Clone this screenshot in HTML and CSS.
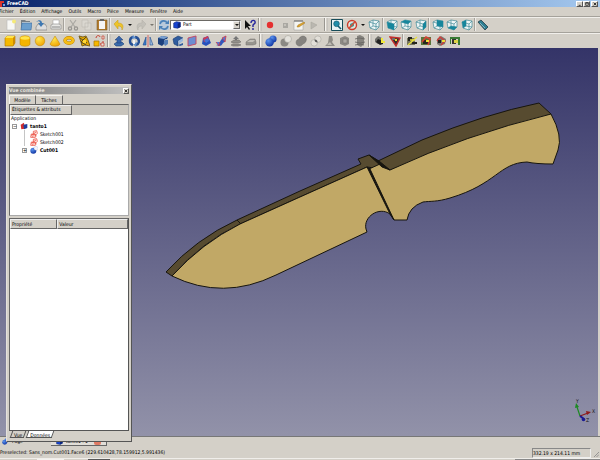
FILE: index.html
```html
<!DOCTYPE html>
<html lang="fr">
<head>
    <meta charset="UTF-8">
    <meta name="viewport" content="width=device-width, initial-scale=1.0">
    <title>FreeCAD</title>
    <link rel="stylesheet" href="styles.css">
</head>
<body>
    <!-- Shared icon shapes -->
    <svg class="sprite" aria-hidden="true">
        <defs>
            <linearGradient id="sky" x1="0" y1="0" x2="0" y2="1"><stop offset="0" stop-color="#343468"/><stop offset="1" stop-color="#9292a9"/></linearGradient>
            <radialGradient id="gold" cx=".35" cy=".3" r=".8"><stop offset="0" stop-color="#ffe64d"/><stop offset="1" stop-color="#f0a000"/></radialGradient>
            <radialGradient id="blue" cx=".35" cy=".3" r=".8"><stop offset="0" stop-color="#5b94ee"/><stop offset="1" stop-color="#0b2e9c"/></radialGradient>
        </defs>
        <symbol id="new" viewBox="0 0 12 12"><path d="M2 1h7l1 2v8H2z" fill="#f8f8f5" stroke="#bbb" stroke-width=".6"/><circle cx="9" cy="2.5" r="2" fill="#f5ea78"/></symbol>
        <symbol id="open" viewBox="0 0 12 12"><path d="M1 10V1h4l1 1h4v3" fill="#777f85"/><path d="M2 3h8v4H2z" fill="#d9dedf"/><path d="M1 11 2 4h10l-1 7z" fill="#6b9fce" stroke="#3a6da2" stroke-width=".6"/></symbol>
        <symbol id="save" viewBox="0 0 12 12"><path d="m1 8 2-3h7l2 3v3H1z" fill="#ddd" stroke="#777" stroke-width=".6"/><path d="M1 3c3-3 6-2 6 1h2L6 8 3 4h2C5 2 3 2 1 3z" fill="#3e78b2"/></symbol>
        <symbol id="print" viewBox="0 0 12 12"><path d="M3 1h6v5H3z" fill="#fff" stroke="#999" stroke-width=".5"/><path d="m1 6 2-1h6l2 1v4H1z" fill="#e8e8e5" stroke="#888" stroke-width=".6"/><path d="M2 8h8" stroke="#888"/></symbol>
        <symbol id="cut" viewBox="0 0 12 12"><path d="m3 1 5 7M9 1 4 8" stroke="#aaa8a3" stroke-width="1.2"/><g fill="none" stroke="#96948f" stroke-width="1.2"><circle cx="3" cy="9.5" r="1.6"/><circle cx="9" cy="9.5" r="1.6"/></g></symbol>
        <symbol id="copy" viewBox="0 0 12 12"><path d="M1 1h6v7H1zM4 4h6v7H4z" fill="#dad7d0" stroke="#bdbab3" stroke-width=".6"/></symbol>
        <symbol id="paste" viewBox="0 0 12 12"><path d="M1 1h10v10H1z" fill="#b37d31" stroke="#75501b" stroke-width=".5"/><path d="M3 2h6v8H3z" fill="#f5f5f5"/><path d="M4 0h4v2H4z" fill="#666"/></symbol>
        <symbol id="undo" viewBox="0 0 12 12"><path d="m1 5 4-4v3c5 0 6 3 4 7 0-3-1-4-4-4v3z" fill="#edc32a" stroke="#c79b10" stroke-width=".5"/></symbol>
        <symbol id="redo" viewBox="0 0 12 12"><path d="M11 5 7 1v3c-5 0-6 3-4 7 0-3 1-4 4-4v3z" fill="#c3c0b9" stroke="#b1aea7" stroke-width=".5"/></symbol>
        <symbol id="refresh" viewBox="0 0 12 12"><path d="M1 1h10v10H1z" fill="#b7cadb"/><path d="M2 5c1-4 6-4 7-1M10 7c-1 4-6 4-7 1" fill="none" stroke="#4a82b8" stroke-width="1.6"/><path d="M11 1v4H7zM1 11V7h4z" fill="#4a82b8"/></symbol>
        <symbol id="help" viewBox="0 0 12 12"><path d="M1 1v9l2-2 2 3 1-1-2-3h3z" fill="#111"/><path d="M7 4c0-4 5-3 4 0L9 6v2M9 9v2" fill="none" stroke="#25259c" stroke-width="1.4"/></symbol>
        <symbol id="record" viewBox="0 0 12 12"><circle cx="6" cy="6" r="3.2" fill="#e53030"/></symbol>
        <symbol id="stop" viewBox="0 0 12 12"><path d="M4 4h5v5H4z" fill="#aaa8a2"/><path d="M5 5h2v2H5z" fill="#c5c2bb"/></symbol>
        <symbol id="macro" viewBox="0 0 12 12"><path d="M1 2h9v9H1z" fill="#f4f4f0" stroke="#999" stroke-width=".5"/><path d="M1 2h9" stroke="#666"/><path d="m4 8 1-2 6-3 1 1-6 4z" fill="#e0a52e" stroke="#8a651b" stroke-width=".4"/></symbol>
        <symbol id="play" viewBox="0 0 12 12"><path d="m3 3 6 3-6 4z" fill="#bab7b0" stroke="#aaa7a0" stroke-width=".6"/></symbol>
        <symbol id="fit" viewBox="0 0 12 12"><path d="M.5.5h11v11H.5z" fill="#e9f2f4" stroke="#154b58"/><circle cx="5.5" cy="4.8" r="2.8" fill="#218eaa" stroke="#115a70" stroke-width=".7"/><path d="m7 7 3 3" stroke="#115a70" stroke-width="1.6"/></symbol>
        <symbol id="nodraw" viewBox="0 0 12 12"><circle cx="6" cy="6" r="4.5" fill="#dfe6e0" stroke="#cd3b2a" stroke-width="1.4"/><path d="m4 5 4-2v4l-4 2z" fill="#3f9a96"/><path d="m3 9 6-6" stroke="#df4932" stroke-width="1.4"/></symbol>
        <symbol id="wire" viewBox="0 0 12 12"><path d="m1 3 4-2 6 1v6l-3 3-6-2z" fill="#eef6f6"/><path d="m1 3 4-2 6 1-3 3zM1 3l1 6 6 2V5M11 2v6l-3 3M5 1v6L2 9M5 7l6 1" fill="none" stroke="#428b98" stroke-width=".7"/></symbol>
        <symbol id="front" viewBox="0 0 12 12"><use href="#wire"/><path d="m1 3 7 2v6L2 9z" fill="#16869c"/></symbol>
        <symbol id="top" viewBox="0 0 12 12"><use href="#wire"/><path d="m1 3 4-2 6 1-3 3z" fill="#16869c"/></symbol>
        <symbol id="right" viewBox="0 0 12 12"><use href="#wire"/><path d="m8 5 3-3v6l-3 3z" fill="#16869c"/></symbol>
        <symbol id="rear" viewBox="0 0 12 12"><use href="#wire"/><path d="m5 1 6 1v6L5 7z" fill="#16869c"/></symbol>
        <symbol id="bottom" viewBox="0 0 12 12"><use href="#wire"/><path d="m5 7 6 1-3 3-6-2z" fill="#16869c"/></symbol>
        <symbol id="left" viewBox="0 0 12 12"><use href="#wire"/><path d="m1 3 4-2v6L2 9z" fill="#16869c"/></symbol>
        <symbol id="measure" viewBox="0 0 12 12"><path d="m1 3 3-2 7 7-3 3z" fill="#2f7d91" stroke="#263e46" stroke-width=".8"/><path d="m3 4 5 5" stroke="#80b9c5"/></symbol>

        <symbol id="box" viewBox="0 0 12 12"><path d="m1 3 2-2h8v7l-2 3H1z" fill="#f5b800" stroke="#a87400" stroke-width=".6"/><path d="m1 3 2-2h8L9 3z" fill="#ffe44c"/><path d="M9 3v8l2-3V1z" fill="#ce8b00"/></symbol>
        <symbol id="cylinder" viewBox="0 0 12 12"><path d="M1 3c0-3 10-3 10 0v6c0 3-10 3-10 0z" fill="#f5b400" stroke="#b57e00" stroke-width=".5"/><ellipse cx="6" cy="3" rx="4.7" ry="1.7" fill="#ffe44c"/></symbol>
        <symbol id="sphere" viewBox="0 0 12 12"><circle cx="6" cy="6" r="4.8" fill="url(#gold)" stroke="#bd8500" stroke-width=".5"/></symbol>
        <symbol id="cone" viewBox="0 0 12 12"><path d="m6 1 5 8c-1 3-9 3-10 0z" fill="url(#gold)" stroke="#bd8500" stroke-width=".5"/></symbol>
        <symbol id="torus" viewBox="0 0 12 12"><ellipse cx="6" cy="5.5" rx="4" ry="2.7" fill="none" stroke="#b37c00" stroke-width="3.4"/><ellipse cx="6" cy="5.5" rx="4" ry="2.7" fill="none" stroke="#f7bd16" stroke-width="2.6"/></symbol>
        <symbol id="shapes" viewBox="0 0 12 12"><path d="m1 1 4 1 3-1 2 4 2 6-5-1-3 1-1-4z" fill="#e2a700" stroke="#705718" stroke-width=".9"/><path d="m2 3 7 5M8 2 3 7l5 3" fill="none" stroke="#554a26" stroke-width="1"/><path d="M5 5h3v3H5z" fill="#ffd936"/></symbol>
        <symbol id="builder" viewBox="0 0 12 12"><path d="M1 6h5v5H1z" fill="#f6b800" stroke="#a97700" stroke-width=".7"/><path d="M3 3c0-3 4-3 4-1M7 9h3V6" fill="none" stroke="#c53c2f"/><path d="M9 1h2v3H9zM8 8h3v3H8z" fill="#e7e3db" stroke="#c53c2f" stroke-width=".7"/></symbol>
        <symbol id="extrude" viewBox="0 0 12 12"><path d="m1 9 3-2h5l2 2-3 2H3z" fill="#3c6cab" stroke="#1b4279" stroke-width=".6"/><path d="m6 1 4 4H8v3H4V5H2z" fill="#3764a8" stroke="#1d3e78" stroke-width=".5"/></symbol>
        <symbol id="revolve" viewBox="0 0 12 12"><path d="M5 10C1 9 1 3 5 2M7 2c5 1 5 7 1 8" fill="none" stroke="#264f94" stroke-width="2.4"/><path d="m5 0 3 3-4 1zM8 12 5 9l4-2z" fill="#5e90ce"/><path d="M5 5h2v4H5z" fill="#f2f3f5"/></symbol>
        <symbol id="mirror" viewBox="0 0 12 12"><path d="m1 10 3-8v8z" fill="#397bcc" stroke="#1e4a8b" stroke-width=".6"/><path d="m11 10-3-8v8z" fill="#9fbce0" stroke="#1e4a8b" stroke-width=".6"/><path d="M6 0v12" stroke="#d85252" stroke-width=".8"/></symbol>
        <symbol id="fillet" viewBox="0 0 12 12"><path d="m1 3 4-2 6 1-1 2C7 4 7 6 7 9l-2 2-4-2z" fill="#1d407d"/><path d="m1 3 4-2 6 1-4 2z" fill="#7ba2d2"/><path d="M7 9c-1-4 2-5 4-4v4l-3 2z" fill="#557fb8"/></symbol>
        <symbol id="chamfer" viewBox="0 0 12 12"><path d="m1 4 5-3 5 2-5 3v5l-4-2z" fill="#315c9e" stroke="#183a70" stroke-width=".6"/><path d="m6 6 5-3v3L7 9z" fill="#9bb8dc"/><path d="m6 10 5-2v2l-3 1z" fill="#315c9e"/></symbol>
        <symbol id="ruled" viewBox="0 0 12 12"><path d="m2 3 8-2v8l-8 2z" fill="#6c8dd2" stroke="#c44360" stroke-width=".9"/></symbol>
        <symbol id="loft" viewBox="0 0 12 12"><path d="m2 3 5-2 3 7-5 3-4-2z" fill="#2850bb"/><path d="m2 3 5-2 1 4-5 2z" fill="#ce3b57"/><path d="m3 5 4-2 1 3-3 2z" fill="#4373d8"/></symbol>
        <symbol id="sweep" viewBox="0 0 12 12"><path d="M1 10c5 0 3-7 9-7v4C7 7 8 11 4 11z" fill="#3258bd"/><path d="m1 7 3 4 1-4M7 3l4-2-1 6z" fill="#5377d4" stroke="#cf3646" stroke-width=".8"/></symbol>
        <symbol id="offset" viewBox="0 0 12 12"><path d="m6 1 3 3H7v2H5V4H3z" fill="#777"/><path d="m1 7 3-2h5l2 2-3 1H3zM1 10l2-1h6l2 1-3 1H3z" fill="#92908a" stroke="#64625f" stroke-width=".5"/></symbol>
        <symbol id="thick" viewBox="0 0 12 12"><path d="m1 7 4-3h5l1 3v2l-3 1H1z" fill="#96948e" stroke="#74726e" stroke-width=".5"/><path d="m2 7 3-2h5L8 7z" fill="#c3c0b9"/></symbol>
        <symbol id="bool" viewBox="0 0 12 12"><circle cx="8" cy="4" r="3.6" fill="url(#blue)"/><circle cx="4.6" cy="7.4" r="4.2" fill="url(#blue)"/></symbol>
        <symbol id="cutop" viewBox="0 0 12 12"><circle cx="4.5" cy="7.5" r="4" fill="#8b8984"/><circle cx="8" cy="4" r="3.5" fill="#e4e2dc" stroke="#9a9893" stroke-width=".5"/></symbol>
        <symbol id="fuse" viewBox="0 0 12 12"><path d="M4 4c2-5 9-3 7 2-1 3-3 2-4 4-3 3-8-1-5-5z" fill="#85837f" stroke="#6d6b67" stroke-width=".5"/></symbol>
        <symbol id="common" viewBox="0 0 12 12"><g fill="#e2dfd8" stroke="#aaa7a1" stroke-width=".6"><circle cx="7.8" cy="4.2" r="3.3"/><circle cx="4.2" cy="7.8" r="3.3"/></g><path d="M4.5 4.5c2 0 3 1 3 3-2 0-3-1-3-3z" fill="#555"/></symbol>
        <symbol id="check" viewBox="0 0 12 12"><path d="M5 1h3l1 4-1 2 3 4H1l3-3z" fill="#8e8c87"/><path d="m3 10 3-3 2 3z" fill="#bebbb4"/></symbol>
        <symbol id="section" viewBox="0 0 12 12"><path d="m1 3 5-2 4 2v6l-4 2-5-2z" fill="#8b8984"/><path d="M4 4h4v4H4z" fill="#aaa8a2" stroke="#706e6b" stroke-width=".5"/></symbol>
        <symbol id="cross" viewBox="0 0 12 12"><path d="m3 1 3-1 4 2v7l-3 3-4-2z" fill="#85837e"/><path d="m1 4 4-1 6 1M1 7l5 1 5-1M1 10l5-1 4 1" fill="none" stroke="#65635f" stroke-width=".8"/></symbol>
        <symbol id="lin" viewBox="0 0 12 12"><path d="m1 4 3-3 4 2v5l-4 1-3-2z" fill="#6f6e69"/><path d="m4 4 5 2v3l-3 1-4-3z" fill="#222"/><path d="M7 3h2v3h2v2H7z" fill="#f0e93d"/></symbol>
        <symbol id="ang" viewBox="0 0 12 12"><path d="m1 2 10 1-4 8z" fill="#332d2c" stroke="#c52f2c" stroke-width="1.4"/><path d="M6 4h2v2H6z" fill="#eedf37"/><path d="M3 3h3v2H3z" fill="#6f6e69"/></symbol>
        <symbol id="clear" viewBox="0 0 12 12"><path d="M1 3h8v7H1z" fill="#76745d"/><path d="M2 2h4v4H2zM6 7h5v2H6z" fill="#23231f"/><path d="m2 10 9-8M4 5h5" stroke="#eae23f" stroke-width="1.3"/></symbol>
        <symbol id="toggle" viewBox="0 0 12 12"><path d="M1 2h10v8H1z" fill="#58763b"/><path d="M3 5h5v4H3z" fill="#262620"/><path d="m2 7 4-5 4 2-2 6" fill="none" stroke="#d34135" stroke-width="1.6"/><path d="M6 5h3v2H6z" fill="#ede13a"/></symbol>
        <symbol id="t3d" viewBox="0 0 12 12"><path d="m2 4 4-3 5 3-1 5-5 2-3-2z" fill="#7b7771"/><path d="m2 6 3-4 5 4-4 4" fill="none" stroke="#ce3e3a" stroke-width="1.4"/><path d="M3 5h3v3H3z" fill="#222"/><path d="M7 5h3v2H7z" fill="#ede13a"/></symbol>
        <symbol id="delta" viewBox="0 0 12 12"><path d="M1 2h10v8H9V4H2v5H1z" fill="#377a34"/><path d="M3 4h4v5H3z" fill="#35352e"/><path d="M5 5h4v3H5z" fill="#dbd447"/></symbol>
        <symbol id="sketch" viewBox="0 0 12 12"><path d="M2 6h6v5H1zM5 5V2l5-1 1 4-3 3M2 8l7-5M4 11l1-5 5 3" fill="#fff0ed" stroke="#ea5143" stroke-width="1.2"/></symbol>
        <symbol id="doc" viewBox="0 0 12 12"><path d="m1 4 5-3 1 9-5 1z" fill="#d32c2c"/><path d="m5 4 6-1v6l-5 2z" fill="#1d3e9e"/></symbol>
        <symbol id="cutblue" viewBox="0 0 12 12"><circle cx="5" cy="7" r="4.5" fill="url(#blue)"/><circle cx="9" cy="3.5" r="3" fill="#f3f5fc" stroke="#9ba9ce" stroke-width=".4"/></symbol>
        <symbol id="cube" viewBox="0 0 12 12"><path d="m1 3 4-2 6 1v7l-4 2-6-1z" fill="#1744d0" stroke="#071e65" stroke-width=".8"/><path d="m7 4 4-2v7l-4 2z" fill="#0a247e"/></symbol>
        <symbol id="close" viewBox="0 0 12 12"><path d="m2 2 8 8M10 2l-8 8" stroke="#111" stroke-width="2.4"/></symbol>
    </svg>

    <div class="app">
        <header class="titlebar">
            <svg class="logo" viewBox="0 0 6 6"><path d="M0 0h4v2H2v4H0z" fill="#d9342b"/><path d="M3 3h2v2H3z" fill="#7ba3df"/></svg>
            <h1 class="title">FreeCAD</h1>
            <div class="window-buttons">
                <button class="win" aria-label="Réduire"><svg viewBox="0 0 12 12"><path d="M2 10h6" stroke="#111" stroke-width="2.4"/></svg></button>
                <button class="win" aria-label="Restaurer"><svg viewBox="0 0 12 12"><path d="M2 2h8v8H2zM2 3h8" fill="none" stroke="#111" stroke-width="2"/></svg></button>
                <button class="win win-close" aria-label="Fermer"><svg><use href="#close"/></svg></button>
            </div>
        </header>

        <nav class="menubar">
            <button>Fichier</button><button>Édition</button><button>Affichage</button><button>Outils</button><button>Macro</button><button>Pièce</button><button>Measure</button><button>Fenêtre</button><button>Aide</button>
        </nav>

        <div class="toolbar">
            <div class="group four">
                <button aria-label="Nouveau"><svg><use href="#new"/></svg></button>
                <button aria-label="Ouvrir"><svg><use href="#open"/></svg></button>
                <button aria-label="Enregistrer"><svg><use href="#save"/></svg></button>
                <button aria-label="Imprimer"><svg><use href="#print"/></svg></button>
            </div>
            <div class="group three line">
                <button aria-label="Couper"><svg><use href="#cut"/></svg></button>
                <button aria-label="Copier"><svg><use href="#copy"/></svg></button>
                <button aria-label="Coller"><svg><use href="#paste"/></svg></button>
            </div>
            <div class="group three line">
                <button aria-label="Annuler"><svg><use href="#undo"/></svg></button>
                <button class="drop" aria-label="Liste d'annulation"></button>
                <button aria-label="Refaire"><svg><use href="#redo"/></svg></button>
                <button class="drop off" aria-label="Liste de rétablissement"></button>
            </div>
            <div class="group one line">
                <button aria-label="Rafraîchir"><svg><use href="#refresh"/></svg></button>
            </div>
            <div class="workbench">
                <svg><use href="#cube"/></svg>
                <select aria-label="Atelier"><option>Part</option></select>
                <span class="spin"></span>
            </div>
            <div class="group one">
                <button aria-label="Qu'est-ce que c'est ?"><svg><use href="#help"/></svg></button>
            </div>
            <div class="group macros grip">
                <button aria-label="Enregistrer une macro"><svg><use href="#record"/></svg></button>
                <button aria-label="Arrêter"><svg><use href="#stop"/></svg></button>
                <button aria-label="Macros"><svg><use href="#macro"/></svg></button>
                <button aria-label="Exécuter"><svg><use href="#play"/></svg></button>
            </div>
            <div class="group view grip">
                <button aria-label="Tout afficher"><svg><use href="#fit"/></svg></button>
                <button aria-label="Style de représentation"><svg><use href="#nodraw"/></svg></button>
                <button class="drop" aria-label="Styles"></button>
                <button aria-label="Axonométrique"><svg><use href="#wire"/></svg></button>
            </div>
            <div class="group three line">
                <button aria-label="Face"><svg><use href="#front"/></svg></button>
                <button aria-label="Dessus"><svg><use href="#top"/></svg></button>
                <button aria-label="Droite"><svg><use href="#right"/></svg></button>
            </div>
            <div class="group three line">
                <button aria-label="Arrière"><svg><use href="#rear"/></svg></button>
                <button aria-label="Dessous"><svg><use href="#bottom"/></svg></button>
                <button aria-label="Gauche"><svg><use href="#left"/></svg></button>
            </div>
            <div class="group one line">
                <button aria-label="Mesurer"><svg><use href="#measure"/></svg></button>
            </div>
        </div>

        <div class="toolbar">
            <div class="group seven">
                <button aria-label="Cube"><svg><use href="#box"/></svg></button>
                <button aria-label="Cylindre"><svg><use href="#cylinder"/></svg></button>
                <button aria-label="Sphère"><svg><use href="#sphere"/></svg></button>
                <button aria-label="Cône"><svg><use href="#cone"/></svg></button>
                <button aria-label="Tore"><svg><use href="#torus"/></svg></button>
                <button aria-label="Primitives"><svg><use href="#shapes"/></svg></button>
                <button aria-label="Générateur de forme"><svg><use href="#builder"/></svg></button>
            </div>
            <div class="group ten grip">
                <button aria-label="Extrusion"><svg><use href="#extrude"/></svg></button>
                <button aria-label="Révolution"><svg><use href="#revolve"/></svg></button>
                <button aria-label="Miroir"><svg><use href="#mirror"/></svg></button>
                <button aria-label="Congé"><svg><use href="#fillet"/></svg></button>
                <button aria-label="Chanfrein"><svg><use href="#chamfer"/></svg></button>
                <button aria-label="Surface réglée"><svg><use href="#ruled"/></svg></button>
                <button aria-label="Lissage"><svg><use href="#loft"/></svg></button>
                <button aria-label="Balayage"><svg><use href="#sweep"/></svg></button>
                <button aria-label="Décalage"><svg><use href="#offset"/></svg></button>
                <button aria-label="Épaisseur"><svg><use href="#thick"/></svg></button>
            </div>
            <div class="group boolean grip">
                <button aria-label="Booléen"><svg><use href="#bool"/></svg></button>
                <button aria-label="Soustraction"><svg><use href="#cutop"/></svg></button>
                <button aria-label="Union"><svg><use href="#fuse"/></svg></button>
                <button aria-label="Intersection"><svg><use href="#common"/></svg></button>
                <button aria-label="Vérifier"><svg><use href="#check"/></svg></button>
                <button aria-label="Section"><svg><use href="#section"/></svg></button>
                <button aria-label="Coupes"><svg><use href="#cross"/></svg></button>
            </div>
            <div class="group two grip">
                <button aria-label="Mesure linéaire"><svg><use href="#lin"/></svg></button>
                <button aria-label="Mesure angulaire"><svg><use href="#ang"/></svg></button>
            </div>
            <div class="group four line">
                <button aria-label="Effacer"><svg><use href="#clear"/></svg></button>
                <button aria-label="Tout basculer"><svg><use href="#toggle"/></svg></button>
                <button aria-label="Basculer 3D"><svg><use href="#t3d"/></svg></button>
                <button aria-label="Basculer delta"><svg><use href="#delta"/></svg></button>
            </div>
        </div>

        <main class="viewport">
            <svg class="scene" viewBox="0 48 598 388" preserveAspectRatio="none">
                <path d="M0 48h598v388H0z" fill="url(#sky)"/>
                <g stroke="#17150f" stroke-width="1" stroke-linejoin="round">
                    <!-- back of the blade, guard and handle -->
                    <path d="M166 272Q196 239 237 220L300 191 361 164 358 159 369 155 378 161 422 140Q485 114 539 103L551 114 390 170 367 167 300 197 240 224Q202 242 172 276z" fill="#574b30"/>
                    <!-- flat face -->
                    <path d="M172 276Q202 243 240 224L300 197 367 167 369 169 380 164 390 170Q465 135 551 114Q563 136 558 150L553 164Q536 164 527 162C499 163 497 184 450 198C437 202 430 201 423 202Q409 207 407 220H394L390 214C379 206 363 217 366 229L367 232 276 275Q223 301 172 276z" fill="#c1a866"/>
                    <path d="m367 167 3 2 24 51-4-6z" fill="#17150f"/>
                    <path d="m369 155 10 6 11 9-8-3z" fill="#17150f"/>
                    <path d="m237 220 4 4" fill="none"/>
                </g>
                <g stroke-width="1.2" fill="none">
                    <path d="m580 416-3-9" stroke="#1b8a22"/>
                    <path d="m575 408 1-5 3 4z" fill="#1b8a22"/>
                    <path d="m580 416 8-3" stroke="#901a1a"/>
                    <path d="m586 411 5 1-4 3z" fill="#901a1a"/>
                    <path d="m580 416 4 3" stroke="#1a1a92" stroke-width="2"/>
                    <circle cx="583.5" cy="419.5" r="1.8" fill="#1a1a92"/>
                </g>
                <g class="axis"><text x="576" y="403">Y</text><text x="592" y="413">X</text><text x="586" y="422">Z</text></g>
            </svg>

            <section class="dock">
                <header class="dock-title"><h2>Vue combinée</h2><button class="win" aria-label="Fermer le panneau"><svg><use href="#close"/></svg></button></header>
                <div class="tabs"><button class="tab active">Modèle</button><button class="tab">Tâches</button></div>
                <div class="tree">
                    <div class="tree-head"><span>Étiquettes &amp; attributs</span></div>
                    <ul class="tree-list">
                        <li>Application</li>
                        <li class="level1"><button class="twisty" aria-label="Replier">−</button><svg><use href="#doc"/></svg><b>tanto1</b></li>
                        <li class="level2"><svg><use href="#sketch"/></svg>Sketch001</li>
                        <li class="level2"><svg><use href="#sketch"/></svg>Sketch002</li>
                        <li class="level2 parent"><button class="twisty" aria-label="Déplier">+</button><svg><use href="#cutblue"/></svg><b>Cut001</b></li>
                    </ul>
                </div>
                <div class="props">
                    <table>
                        <thead><tr><th class="name">Propriété</th><th>Valeur</th></tr></thead>
                    </table>
                </div>
                <div class="bottom-tabs"><button>Vue</button><button class="active">Données</button></div>
            </section>
        </main>

        <div class="doc-tabs">
            <button class="doc-tab"><svg><use href="#bool"/></svg><span>Page</span></button>
            <button class="doc-tab active"><svg><use href="#cube"/></svg><span>tanto1 : 1</span><i></i></button>
        </div>

        <footer class="statusbar">
            <span>Preselected: Sans_nom.Cut001.Face6 (229.610428,78.159912,5.991436)</span>
            <span class="size">332.19 x 214.11 mm</span>
            <svg class="resize" viewBox="0 0 6 6"><path d="m0 6 6-6M3 6l3-3" stroke="#888"/></svg>
        </footer>
        <div class="taskbar"><span class="task"></span><span class="task dark"></span><span class="tray"></span></div>
    </div>
</body>
</html>
```

FILE: styles.css
```css
* {
    box-sizing: border-box;
}
body {
    margin: 0;
    background-color: #d4d0c8;
    color: #000;
    font-family: "DejaVu Sans Condensed", "DejaVu Sans", sans-serif;
    font-size: 5px;
    line-height: 7px;
}
button, select {
    padding: 0;
    margin: 0;
    border: none;
    border-radius: 0;
    background: none;
    color: inherit;
    font: inherit;
}
h1, h2 {
    margin: 0;
    font-size: 5px;
    line-height: 7px;
}
.sprite {
    position: absolute;
    width: 0;
    height: 0;
}
.app {
    display: flex;
    flex-direction: column;
    height: 100vh;
    overflow: hidden;
}
/* Title bar and menus */
.titlebar {
    display: flex;
    align-items: center;
    flex: 0 0 7px;
    background: linear-gradient(to right, #0a246a, #a6caf0);
    color: #fff;
}
.logo {
    width: 6px;
    height: 6px;
    margin-right: 1px;
}
.window-buttons {
    display: flex;
    margin-left: auto;
    margin-right: 2px;
}
.win {
    display: flex;
    align-items: center;
    justify-content: center;
    width: 7px;
    height: 6px;
    background-color: #d4d0c8;
    border: 1px solid;
    border-color: #fff #555 #555 #fff;
}
.win svg {
    width: 4px;
    height: 4px;
    flex: none;
}
.win-close {
    margin-left: 1px;
}
.menubar {
    display: flex;
    flex: 0 0 9px;
    gap: 6px;
    margin-left: -1px;
}
/* Toolbars */
.toolbar {
    display: flex;
    align-items: center;
    flex: 0 0 16px;
    padding-left: 3px;
    border-top: 1px solid #a5a29b;
    box-shadow: inset 0 1px #f1efeb;
}
.group {
    display: flex;
    flex: none;
    align-items: center;
    height: 13px;
}
.group button {
    display: flex;
    flex: 1;
    align-items: center;
    justify-content: center;
}
.group svg {
    flex: none;
    width: 12px;
    height: 12px;
}
.one { width: 15px; }
.two { width: 34px; }
.three { width: 46px; }
.four { width: 60px; }
.macros { width: 65px; padding-right: 2px; }
.view { width: 58px; }
.seven { width: 103px; }
.boolean { width: 108px; }
.ten { width: 151px; }
.line {
    border-left: 1px solid #a5a29b;
    box-shadow: inset 1px 0 #eeece8;
    padding-left: 2px;
}
.grip {
    margin-left: 1px;
    padding-left: 5px;
    background: linear-gradient(to right, #999690 1px, #f4f2ee 1px, #f4f2ee 2px, #d4d0c8 2px, #d4d0c8 3px, #999690 3px, #f4f2ee 4px, transparent 4px) no-repeat;
}
.group .drop {
    flex: 0 0 7px;
}
.drop::after {
    content: "";
    border: 2px solid transparent;
    border-top-color: #111;
    border-bottom: 0;
}
.drop.off::after {
    border-top-color: #77756f;
}
.workbench {
    display: flex;
    align-items: center;
    width: 71px;
    height: 10px;
    margin-right: 1px;
    padding-left: 2px;
    background-color: #fff;
    border: 1px solid;
    border-color: #6b6964 #eee #eee #6b6964;
}
.workbench svg {
    width: 8px;
    height: 8px;
}
.workbench select {
    flex: 1;
    padding-left: 2px;
    appearance: none;
}
.spin {
    display: flex;
    align-items: center;
    justify-content: center;
    width: 7px;
    height: 8px;
    background-color: #d4d0c8;
    border: 1px solid;
    border-color: #eee #666 #666 #eee;
}
.spin::after {
    content: "";
    border: 2px solid transparent;
    border-top-color: #111;
    border-bottom: 0;
}
/* 3D view */
.viewport {
    position: relative;
    z-index: 1;
    flex: 1;
    min-height: 0;
    padding-right: 2px;
    border-bottom: 1px solid #777;
}
.scene {
    display: block;
    width: 100%;
    height: 100%;
}
.axis {
    font-size: 5px;
    fill: #111;
}
/* Floating panel, lies over the 3D view and the document tabs */
.dock {
    position: absolute;
    top: 36px;
    bottom: -6px;
    left: 6px;
    display: flex;
    flex-direction: column;
    width: 126px;
    padding: 2px;
    background-color: #d4d0c8;
    border: 1px solid;
    border-color: #e4e1dc #555 #555 #e4e1dc;
}
.dock-title {
    display: flex;
    justify-content: space-between;
    align-items: center;
    height: 7px;
    background: linear-gradient(to right, #808080, #c0c0c0);
    color: #e4e1db;
}
.dock-title .win {
    width: 6px;
}
.tabs {
    display: flex;
    height: 10px;
    padding-top: 1px;
}
.tab {
    width: 27px;
    border-top: 1px solid #f4f2ee;
    border-right: 1px solid #666;
}
.tab.active {
    border-left: 1px solid #f4f2ee;
}
.tree {
    height: 112px;
    background-color: #fff;
    border: 1px solid;
    border-color: #666 #aaa #aaa #666;
}
.tree-head {
    display: flex;
    height: 10px;
    background-color: #c9c5bd;
}
.tree-head span, th {
    padding: 0 1px;
    background-color: #d4d0c8;
    border: 1px solid;
    border-color: #eee #666 #666 #eee;
    font-weight: normal;
    text-align: left;
}
.tree-head span {
    width: 62px;
}
.tree-list {
    display: grid;
    grid-template-rows: repeat(5, 1fr);
    height: 37px;
    margin: 0;
    padding: 0 0 0 1px;
    list-style: none;
}
.tree-list li {
    display: flex;
    align-items: center;
}
.tree-list svg {
    width: 8px;
    height: 8px;
    margin-right: 2px;
}
.level1 {
    padding-left: 1px;
}
.tree-list .level2 {
    margin-left: 13px;
    padding-left: 5px;
    border-left: 1px solid #c5c5c5;
}
.tree-list .parent {
    margin-left: 11px;
    padding-left: 0;
    border-left: none;
}
.twisty {
    width: 5px;
    height: 5px;
    margin-right: 3px;
    border: 1px solid #999;
    line-height: 3px;
}
.props {
    flex: 1;
    margin-top: 2px;
    background-color: #fff;
    border: 1px solid;
    border-color: #666 #555 #555 #666;
}
.props table {
    width: 100%;
    border-collapse: separate;
    border-spacing: 0;
}
th {
    height: 10px;
}
.name {
    width: 40%;
}
.bottom-tabs {
    display: flex;
    height: 8px;
    padding-left: 1px;
}
.bottom-tabs button {
    position: relative;
    z-index: 1;
    height: 7px;
    padding: 0 4px;
    line-height: 6px;
}
/* slanted outline behind the label */
.bottom-tabs button::before {
    content: "";
    position: absolute;
    z-index: -1;
    inset: 0 1px;
    border: 1px solid #555;
    border-top: none;
    transform: skewX(-20deg);
}
.bottom-tabs .active::before {
    background-color: #fff;
}
/* Document tabs and status bar */
.doc-tabs {
    display: flex;
    flex: 0 0 10px;
}
.doc-tab {
    display: flex;
    align-items: center;
    gap: 3px;
    width: 51px;
    padding-left: 2px;
    height: 9px;
}
.doc-tab.active {
    width: 56px;
    padding: 0 5px;
    background-color: #e1ded8;
    border-right: 1px solid #666;
    border-bottom: 1px solid #666;
}
.doc-tab svg {
    width: 7px;
    height: 7px;
}
.doc-tab i {
    width: 7px;
    height: 7px;
    margin-left: auto;
    border-radius: 2px;
    background-color: #e07a64;
}
.statusbar {
    display: flex;
    align-items: center;
    flex: 0 0 11px;
}
.size {
    width: 59px;
    height: 10px;
    margin-left: auto;
    padding-top: 1px;
    border: 1px solid;
    border-color: #888 #eee #eee #888;
}
.resize {
    align-self: flex-end;
    width: 5px;
    height: 5px;
    margin: 0 1px 1px 3px;
}
.taskbar {
    display: flex;
    flex: 0 0 2px;
    border-top: 1px solid #f0eeea;
}
.task {
    width: 27px;
    margin-left: 37px;
    background-color: #f4f2ee;
}
.task.dark {
    width: 22px;
    margin-left: 24px;
    background-color: #555;
}
.tray {
    width: 85px;
    margin-left: auto;
    background-color: #888;
}
```
